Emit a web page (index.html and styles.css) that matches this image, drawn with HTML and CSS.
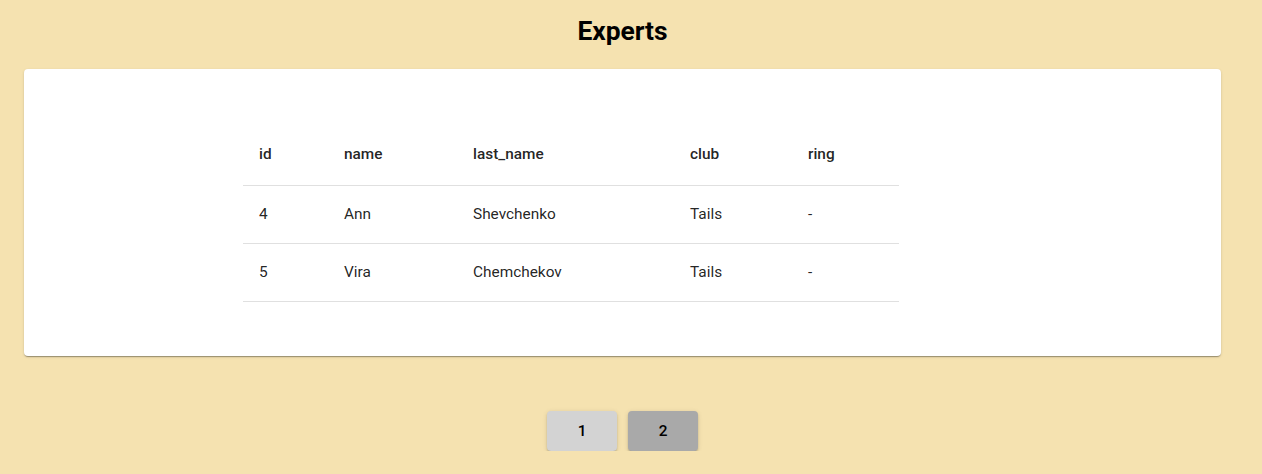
FILE: index.html
```html
<!DOCTYPE html>
<html>
<head>
<meta charset="utf-8">
<link rel="stylesheet" href="styles.css">
</head>
<body>
<div class="page">
  <h1 class="title">Experts</h1>
  <div class="card">
    <table class="table">
      <colgroup>
        <col style="width:85px">
        <col style="width:129px">
        <col style="width:217px">
        <col style="width:118px">
        <col style="width:107px">
      </colgroup>
      <thead>
        <tr><th>id</th><th>name</th><th>last_name</th><th>club</th><th>ring</th></tr>
      </thead>
      <tbody>
        <tr><td>4</td><td>Ann</td><td>Shevchenko</td><td>Tails</td><td>-</td></tr>
        <tr><td>5</td><td>Vira</td><td>Chemchekov</td><td>Tails</td><td>-</td></tr>
      </tbody>
    </table>
  </div>
  <div class="pager">
    <button class="pbtn">1</button>
    <button class="pbtn active">2</button>
  </div>
</div>
</body>
</html>
```
FILE: styles.css
```css
html, body {
  margin: 0;
  padding: 0;
  background: #f5e2b0;
  font-family: Roboto, "Liberation Sans", sans-serif;
}
.page {
  width: 1197px;
  margin-left: 24px;
  padding-top: 17px;
}
.title {
  margin: 0 0 23px 0;
  font-size: 26.4px;
  line-height: 29px;
  font-weight: 700;
  text-align: center;
  color: #000;
}
.card {
  background: #fff;
  border-radius: 4px;
  box-shadow: 0 2px 1px -1px rgba(0,0,0,0.2), 0 1px 1px 0 rgba(0,0,0,0.14), 0 1px 3px 0 rgba(0,0,0,0.12);
  padding: 57px 0 0 219px;
  height: 287px;
  box-sizing: border-box;
}
.table {
  border-collapse: collapse;
  width: 656px;
  table-layout: fixed;
}
.table th, .table td {
  text-align: left;
  padding: 16px 16px 17px 16px;
  line-height: 24px;
  font-size: 15.4px;
  color: rgba(0,0,0,0.87);
  border-bottom: 1px solid #e0e0e0;
}
.table th {
  font-weight: 500;
  padding-top: 16px;
  padding-bottom: 19px;
}
.table td {
  font-weight: 400;
}
.pager {
  display: flex;
  justify-content: center;
  gap: 11px;
  margin-top: 55px;
}
.pbtn {
  width: 70px;
  height: 40px;
  border: none;
  border-radius: 4px;
  background: #d3d3d3;
  font-family: Roboto, "Liberation Sans", sans-serif;
  font-size: 15.4px;
  font-weight: 500;
  color: #000;
  box-shadow: 0 3px 1px -2px rgba(0,0,0,0.2), 0 2px 2px 0 rgba(0,0,0,0.14), 0 1px 5px 0 rgba(0,0,0,0.12);
}
.pbtn.active {
  background: #a9a9a9;
}
```
